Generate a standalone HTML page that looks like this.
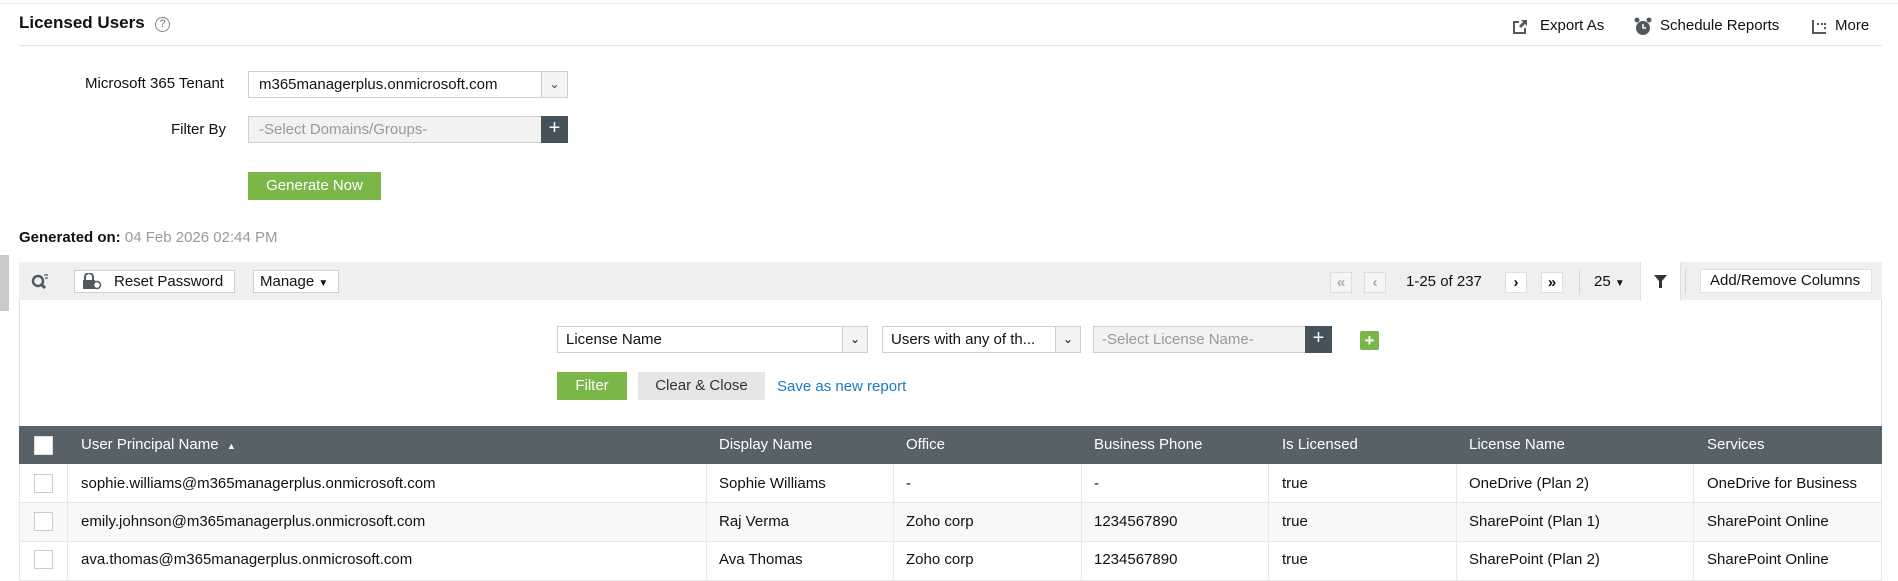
<!DOCTYPE html>
<html><head><meta charset="utf-8"><style>
*{box-sizing:border-box;margin:0;padding:0}
body{width:1898px;height:580px;background:#fff;font-family:"Liberation Sans",Tahoma,sans-serif;color:#111;position:relative;overflow:hidden;font-size:15px}
.a{position:absolute;white-space:nowrap}
.box{position:absolute;border:1px solid #cfcfcf;background:#fff;white-space:nowrap;overflow:hidden}
.dark{background:#46525a;color:#fff;text-align:center;font-size:20px;line-height:25px}
.cb{position:absolute;width:19px;height:19px;border:1px solid #ccc;background:#fff}
.pg{position:absolute;top:272px;width:22px;height:21px;border:1px solid #ddd;background:#fff;text-align:center;font-size:15px;line-height:19px;font-weight:bold}
.th{position:absolute;top:426px;height:38px;line-height:38px;color:#fff;font-size:15px;white-space:nowrap}
.row{position:absolute;left:19px;width:1863px;height:39px;border-bottom:1px solid #e8e8e8}
.vl{position:absolute;width:1px;background:#e8e8e8;top:464px;height:116px}
.td{position:absolute;font-size:15px;white-space:nowrap}
</style></head><body>
<div class="a" style="left:0;top:3px;width:1898px;height:1px;background:#e6e6e6"></div>
<div class="a" style="left:19px;top:13px;font-size:17px;font-weight:bold;color:#111">Licensed Users</div>
<div class="a" style="left:155px;top:17px;width:15px;height:15px;border:1px solid #888;border-radius:50%;font-size:11px;line-height:13px;text-align:center;color:#777">?</div>
<div class="a" style="left:19px;top:45px;width:1863px;height:1px;background:#e4e4e4"></div>
<svg class="a" style="left:1512px;top:19px" width="16" height="16" viewBox="0 0 16 16"><path d="M1 2h6v2H3v9h9V9h2v6H1z" fill="#50595e"/><path d="M9 1h6v6l-2-2-4 4-2-2 4-4z" fill="#50595e"/></svg>
<div class="a" style="left:1540px;top:17px;font-size:15px">Export As</div>
<svg class="a" style="left:1634px;top:17px" width="18" height="19" viewBox="0 0 18 19"><circle cx="9" cy="11" r="7" fill="#50595e"/><circle cx="3" cy="3" r="2.5" fill="#50595e"/><circle cx="15" cy="3" r="2.5" fill="#50595e"/><path d="M9 7v4h3" stroke="#fff" stroke-width="1.5" fill="none"/></svg>
<div class="a" style="left:1660px;top:17px;font-size:15px">Schedule Reports</div>
<svg class="a" style="left:1811px;top:19px" width="16" height="15" viewBox="0 0 16 15"><path d="M1 1h2v12h12v2H1z" fill="#50595e"/><rect x="6" y="4" width="2" height="2" fill="#50595e"/><rect x="10" y="4" width="2" height="2" fill="#50595e"/><rect x="13" y="4" width="2" height="2" fill="#50595e"/><rect x="13" y="8" width="2" height="2" fill="#50595e"/></svg>
<div class="a" style="left:1835px;top:17px;font-size:15px">More</div>
<div class="a" style="left:85px;top:75px;font-size:15px">Microsoft 365 Tenant</div>
<div class="box" style="left:248px;top:71px;width:320px;height:27px;font-size:15px;padding:4px 10px">m365managerplus.onmicrosoft.com</div>
<div class="box" style="left:541px;top:71px;width:27px;height:27px;background:#f4f4f4;text-align:center;font-size:12px;line-height:25px;color:#444">&#x2304;</div>
<div class="a" style="left:171px;top:121px;font-size:15px">Filter By</div>
<div class="box" style="left:248px;top:116px;width:294px;height:27px;background:#f2f2f2;color:#999;font-size:15px;padding:4px 10px">-Select Domains/Groups-</div>
<div class="a dark" style="left:541px;top:116px;width:27px;height:27px">+</div>
<div class="a" style="left:248px;top:172px;width:133px;height:28px;background:#7ab648;color:#fff;text-align:center;line-height:28px;font-size:15px">Generate Now</div>
<div class="a" style="left:19px;top:229px;font-size:15px"><b>Generated on:</b> <span style="color:#999">04 Feb 2026 02:44 PM</span></div>
<div class="a" style="left:0;top:255px;width:9px;height:56px;background:#c9c9c9"></div>
<div class="a" style="left:19px;top:262px;width:1863px;height:38px;background:#efefef"></div>
<svg class="a" style="left:31px;top:273px" width="18" height="18" viewBox="0 0 18 18"><circle cx="7" cy="8" r="5" stroke="#50595e" stroke-width="2.5" fill="none"/><path d="M10 11l4 4" stroke="#50595e" stroke-width="3"/><path d="M13 2h4M14 5h3" stroke="#50595e" stroke-width="1.2"/></svg>
<div class="box" style="left:74px;top:270px;width:161px;height:23px"></div>
<svg class="a" style="left:82px;top:273px" width="20" height="17" viewBox="0 0 20 17"><path d="M3 7V4a4 4 0 0 1 8 0v3" stroke="#50595e" stroke-width="2" fill="none"/><rect x="1" y="7" width="12" height="9" fill="#50595e"/><circle cx="15" cy="12" r="3.5" stroke="#50595e" stroke-width="1.5" fill="#fff"/></svg>
<div class="a" style="left:114px;top:273px;font-size:15px">Reset Password</div>
<div class="box" style="left:253px;top:270px;width:86px;height:23px;padding:2px 6px;font-size:15px">Manage <span style="font-size:10px">&#9660;</span></div>
<div class="pg" style="left:1330px;color:#aaa;background:#f5f5f5">«</div>
<div class="pg" style="left:1364px;color:#aaa;background:#f5f5f5">‹</div>
<div class="a" style="left:1406px;top:273px;font-size:15px">1-25 of 237</div>
<div class="pg" style="left:1505px">›</div>
<div class="pg" style="left:1541px">»</div>
<div class="a" style="left:1579px;top:270px;width:1px;height:24px;background:#d5d5d5"></div>
<div class="a" style="left:1594px;top:273px;font-size:15px">25 <span style="font-size:10px">&#9660;</span></div>
<div class="a" style="left:1640px;top:262px;width:41px;height:39px;background:#fff;border-left:1px solid #e0e0e0;border-right:1px solid #e0e0e0"></div>
<svg class="a" style="left:1654px;top:275px" width="13" height="13" viewBox="0 0 13 13"><path d="M0 0h13L8 6v7H5V6z" fill="#333"/></svg>
<div class="a" style="left:1685px;top:270px;width:1px;height:24px;background:#d5d5d5"></div>
<div class="box" style="left:1700px;top:269px;width:172px;height:24px;border-color:#e0e0e0;font-size:15px;padding:2px 9px">Add/Remove Columns</div>
<div class="a" style="left:19px;top:300px;width:1px;height:126px;background:#e0e0e0"></div>
<div class="a" style="left:1881px;top:300px;width:1px;height:126px;background:#e0e0e0"></div>
<div class="box" style="left:557px;top:326px;width:311px;height:27px;font-size:15px;padding:4px 8px">License Name</div>
<div class="box" style="left:842px;top:326px;width:26px;height:27px;background:#f4f4f4;text-align:center;font-size:12px;line-height:25px">&#x2304;</div>
<div class="box" style="left:882px;top:326px;width:199px;height:27px;font-size:15px;padding:4px 8px">Users with any of th...</div>
<div class="box" style="left:1055px;top:326px;width:26px;height:27px;background:#f4f4f4;text-align:center;font-size:12px;line-height:25px">&#x2304;</div>
<div class="box" style="left:1093px;top:326px;width:214px;height:27px;background:#f2f2f2;color:#999;font-size:15px;padding:4px 8px">-Select License Name-</div>
<div class="a dark" style="left:1305px;top:326px;width:27px;height:27px">+</div>
<div class="a" style="left:1360px;top:331px;width:19px;height:19px;background:#7ab648;color:#fff;text-align:center;font-size:17px;line-height:19px;font-weight:bold;border-radius:2px">+</div>
<div class="a" style="left:557px;top:372px;width:70px;height:28px;background:#7ab648;color:#fff;text-align:center;line-height:28px;font-size:15px">Filter</div>
<div class="a" style="left:638px;top:372px;width:127px;height:28px;background:#e6e6e6;color:#333;text-align:center;line-height:28px;font-size:15px">Clear &amp; Close</div>
<div class="a" style="left:777px;top:378px;color:#1a7ac8;font-size:15px">Save as new report</div>
<div class="a" style="left:19px;top:426px;width:1863px;height:38px;background:#566168"></div>
<div class="a" style="left:34px;top:436px;width:19px;height:19px;background:#fff;border:1px solid #ddd"></div>
<div class="th" style="left:81px">User Principal Name &nbsp;<span style="font-size:9px">&#9650;</span></div>
<div class="th" style="left:719px">Display Name</div>
<div class="th" style="left:906px">Office</div>
<div class="th" style="left:1094px">Business Phone</div>
<div class="th" style="left:1282px">Is Licensed</div>
<div class="th" style="left:1469px">License Name</div>
<div class="th" style="left:1707px">Services</div>
<div class="row" style="top:464px"></div>
<div class="row" style="top:503px;background:#f8f8f8"></div>
<div class="row" style="top:542px"></div>
<div class="vl" style="left:19px"></div><div class="vl" style="left:67px"></div><div class="vl" style="left:706px"></div><div class="vl" style="left:893px"></div><div class="vl" style="left:1081px"></div><div class="vl" style="left:1268px"></div><div class="vl" style="left:1456px"></div><div class="vl" style="left:1693px"></div><div class="vl" style="left:1881px"></div>
<div class="cb" style="left:34px;top:474px"></div><div class="cb" style="left:34px;top:512px"></div><div class="cb" style="left:34px;top:550px"></div>
<div class="td" style="left:81px;top:475px">sophie.williams@m365managerplus.onmicrosoft.com</div>
<div class="td" style="left:719px;top:475px">Sophie Williams</div>
<div class="td" style="left:906px;top:475px">-</div>
<div class="td" style="left:1094px;top:475px">-</div>
<div class="td" style="left:1282px;top:475px">true</div>
<div class="td" style="left:1469px;top:475px">OneDrive (Plan 2)</div>
<div class="td" style="left:1707px;top:475px">OneDrive for Business</div>
<div class="td" style="left:81px;top:513px">emily.johnson@m365managerplus.onmicrosoft.com</div>
<div class="td" style="left:719px;top:513px">Raj Verma</div>
<div class="td" style="left:906px;top:513px">Zoho corp</div>
<div class="td" style="left:1094px;top:513px">1234567890</div>
<div class="td" style="left:1282px;top:513px">true</div>
<div class="td" style="left:1469px;top:513px">SharePoint (Plan 1)</div>
<div class="td" style="left:1707px;top:513px">SharePoint Online</div>
<div class="td" style="left:81px;top:551px">ava.thomas@m365managerplus.onmicrosoft.com</div>
<div class="td" style="left:719px;top:551px">Ava Thomas</div>
<div class="td" style="left:906px;top:551px">Zoho corp</div>
<div class="td" style="left:1094px;top:551px">1234567890</div>
<div class="td" style="left:1282px;top:551px">true</div>
<div class="td" style="left:1469px;top:551px">SharePoint (Plan 2)</div>
<div class="td" style="left:1707px;top:551px">SharePoint Online</div>
</body></html>
